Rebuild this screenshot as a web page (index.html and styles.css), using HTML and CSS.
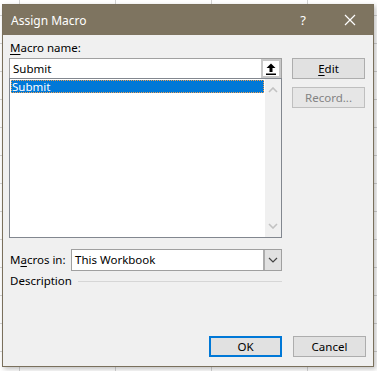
FILE: index.html
```html
<!DOCTYPE html>
<html lang="en">
<head>
  <meta charset="UTF-8">
  <meta name="viewport" content="width=device-width, initial-scale=1.0">
  <title>Assign Macro</title>
  <link rel="stylesheet" href="styles.css">
</head>
<body>

  <div class="dialog">
    <div class="titlebar">
      <span class="title">Assign Macro</span>
      <span class="help">?</span>
      <svg class="close" width="12" height="12" viewBox="0 0 12 12">
        <path d="M1 1 L11 11 M11 1 L1 11" stroke="#fff" stroke-width="1.2" fill="none"/>
      </svg>
    </div>

    <div class="body">
      <div class="main">
        <div class="left">
          <div class="label"><u>M</u>acro name:</div>
          <div class="namebox">
            <span class="name-text">Submit</span>
            <span class="upbtn">
              <svg width="12" height="12" viewBox="0 0 12 12">
                <path d="M6 0.5 L10.5 5 L7.5 5 L7.5 9 L4.5 9 L4.5 5 L1.5 5 Z" fill="#000"/>
                <rect x="1" y="10.5" width="10" height="1.5" fill="#000"/>
              </svg>
            </span>
          </div>
          <div class="list">
            <div class="items">
              <div class="item selected">Submit</div>
            </div>
            <div class="scroll">
              <svg width="10" height="6" viewBox="0 0 10 6">
                <path d="M1 5 L5 1 L9 5" stroke="#c2c2c2" stroke-width="1.6" fill="none"/>
              </svg>
              <svg width="10" height="6" viewBox="0 0 10 6">
                <path d="M1 1 L5 5 L9 1" stroke="#c2c2c2" stroke-width="1.6" fill="none"/>
              </svg>
            </div>
          </div>
        </div>

        <div class="side">
          <button class="btn"><u>E</u>dit</button>
          <button class="btn disabled">Record...</button>
        </div>
      </div>

      <div class="macros-in">
        <span class="label">M<u>a</u>cros in:</span>
        <div class="select">
          <span class="select-text">This Workbook</span>
          <span class="select-btn">
            <svg width="10" height="6" viewBox="0 0 10 6">
              <path d="M1 1 L5 5 L9 1" stroke="#444" stroke-width="1.2" fill="none"/>
            </svg>
          </span>
        </div>
      </div>

      <div class="desc">
        <span class="label">Description</span>
        <span class="rule"></span>
      </div>

      <div class="footer">
        <button class="btn default">OK</button>
        <button class="btn">Cancel</button>
      </div>
    </div>
  </div>

</body>
</html>
```

FILE: styles.css
```css
html, body {
  height: 100%;
}

body {
  margin: 0;
  padding: 0;
  font-family: 'Noto Sans', 'Open Sans', sans-serif;
  font-size: 11.5px;
  color: #000;
  background-color: #fff;
  background-image:
    linear-gradient(to right, #d4d4d4 1px, transparent 1px),
    linear-gradient(to bottom, #d4d4d4 1px, transparent 1px);
  background-size: 96px 28px;
  background-position: 19px 15px;
  overflow: hidden;
}

.dialog {
  box-sizing: border-box;
  margin: 4px 0 0 2px;
  width: 372px;
  height: 363px;
  border: 1px solid #7a705c;
  background-color: #f0f0f0;
  display: flex;
  flex-direction: column;
  box-shadow: 2px 2px 5px rgba(0, 0, 0, 0.25);
}

.titlebar {
  height: 30px;
  background-color: #7e7460;
  color: #fff;
  display: flex;
  align-items: center;
  padding-left: 8px;
  flex-shrink: 0;
}

.title {
  font-size: 12px;
  flex: 1;
}

.help {
  font-size: 13px;
  margin-right: 38px;
}

.close {
  margin-right: 17px;
}

.body {
  flex: 1;
  display: flex;
  flex-direction: column;
  padding: 5px 7px 9px 6px;
}

.main {
  display: flex;
  gap: 10px;
}

.left {
  width: 273px;
  display: flex;
  flex-direction: column;
}

.label {
  line-height: 16px;
  padding-left: 1px;
  white-space: nowrap;
}

.label u {
  text-underline-offset: 2px;
}

.namebox {
  box-sizing: border-box;
  margin-top: 2px;
  height: 20px;
  border: 1px solid #a0a0a0;
  border-bottom: none;
  background-color: #fff;
  display: flex;
  align-items: center;
}

.name-text {
  flex: 1;
  padding-left: 3px;
}

.upbtn {
  box-sizing: border-box;
  width: 20px;
  height: 19px;
  border: 2px solid #c8c8c8;
  background-color: #fff;
  display: flex;
  align-items: center;
  justify-content: center;
}

.list {
  box-sizing: border-box;
  height: 160px;
  border: 1px solid #82878f;
  background-color: #fff;
  display: flex;
}

.items {
  flex: 1;
  padding: 1px;
}

.item {
  line-height: 13px;
  padding-left: 1px;
}

.item.selected {
  background-color: #0078d7;
  color: #fff;
  outline: 1px dotted #f0a050;
  outline-offset: -1px;
}

.scroll {
  width: 16px;
  background-color: #f0f0f0;
  display: flex;
  flex-direction: column;
  justify-content: space-between;
  align-items: center;
  padding: 8px 0 8px;
}

.side {
  width: 73px;
  padding-top: 18px;
  display: flex;
  flex-direction: column;
  gap: 8px;
}

.btn {
  box-sizing: border-box;
  height: 21px;
  width: 73px;
  font-family: inherit;
  font-size: 11.5px;
  color: #000;
  background-color: #e1e1e1;
  border: 1px solid #adadad;
  padding: 0;
}

.btn u {
  text-underline-offset: 2px;
}

.btn.disabled {
  color: #838383;
  border-color: #bfbfbf;
  background-color: #e6e6e6;
}

.btn.default {
  border: 2px solid #0078d7;
}

.macros-in {
  margin-top: 11px;
  display: flex;
  align-items: center;
  justify-content: space-between;
  width: 273px;
}

.select {
  box-sizing: border-box;
  flex-shrink: 0;
  width: 211px;
  height: 22px;
  border: 1px solid #a0a0a0;
  background-color: #fff;
  display: flex;
}

.select-text {
  flex: 1;
  line-height: 20px;
  padding-left: 3px;
}

.select-btn {
  box-sizing: border-box;
  width: 18px;
  background-color: #e1e1e1;
  border-left: 2px solid #adadad;
  display: flex;
  align-items: center;
  justify-content: center;
}

.desc {
  margin-top: 2px;
  width: 273px;
  display: flex;
  align-items: center;
  gap: 6px;
}

.rule {
  flex: 1;
  height: 1px;
  background-color: #d6d6d6;
}

.footer {
  margin-top: auto;
  display: flex;
  justify-content: flex-end;
  gap: 11px;
}
```
